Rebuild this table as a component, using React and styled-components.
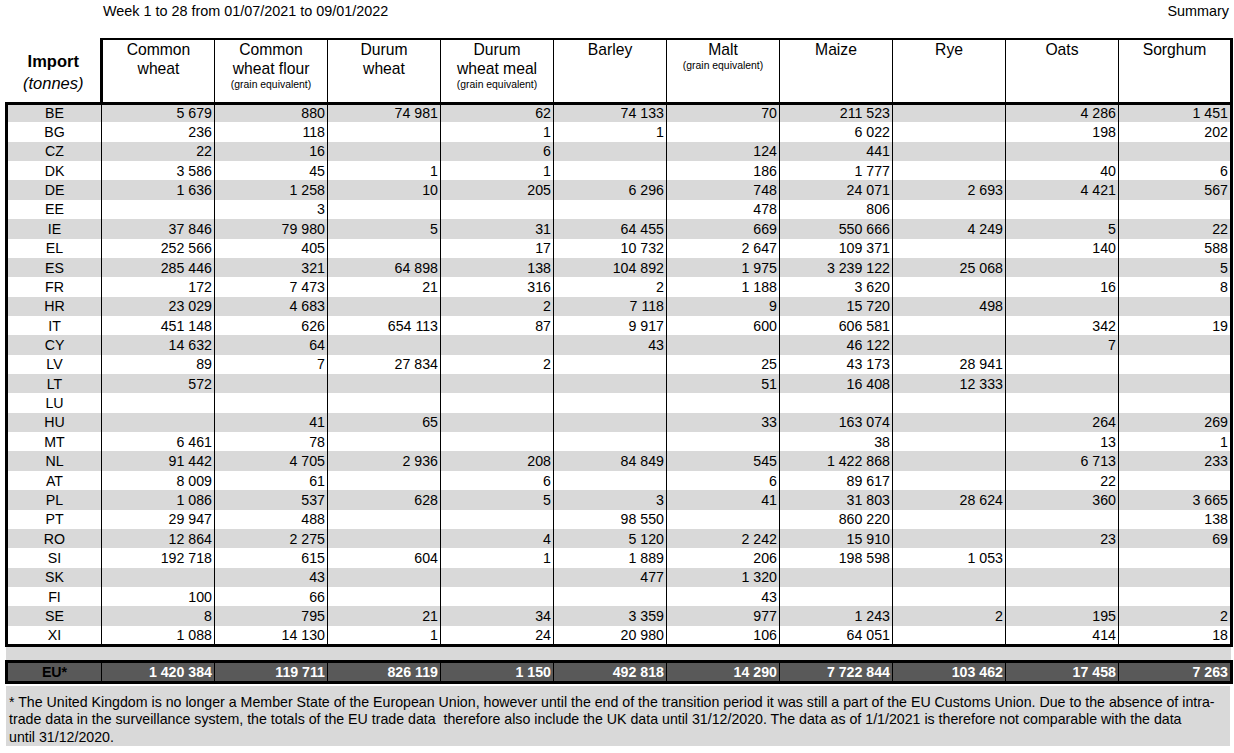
import React from 'react';
import styled, { createGlobalStyle } from 'styled-components';

const GlobalStyle = createGlobalStyle`
  body {
    margin: 0;
    background: #fff;
    color: #000;
    font-family: "Liberation Sans", Arial, sans-serif;
  }
`;

const Page = styled.div`
  width: 1234px;
  padding-left: 5px;
  box-sizing: border-box;
`;

const TopBar = styled.div`
  display: flex;
  justify-content: space-between;
  height: 19px;
  padding: 3px 5px 0 98px;
  font-size: 14.4px;
  line-height: 16px;
`;

const Sheet = styled.table`
  border-collapse: collapse;
  table-layout: fixed;
  width: 1226px;
  margin-top: ${props => props.$top || 0}px;
  font-size: 14.2px;
`;

const Col = styled.col`
  width: ${props => props.$w}px;
`;

const HeadRow = styled.tr`
  height: 64px;
`;

const ImportCell = styled.th`
  border-right: 3px solid #000;
  border-bottom: 3px solid #000;
  padding: 3px 0 0;
  text-align: center;
  vertical-align: middle;
  font-size: 16.5px;
  line-height: 22px;
  font-weight: normal;
`;

const ImportTitle = styled.div`
  font-weight: bold;
`;

const ImportUnit = styled.div`
  font-style: italic;
`;

const HeadCell = styled.th`
  border-top: 2px solid #000;
  border-left: 1px solid #000;
  border-right: ${props => (props.$last ? 3 : 1)}px solid #000;
  border-bottom: 3px solid #000;
  padding: 0;
  vertical-align: top;
  text-align: center;
  font-weight: normal;
  font-size: 15.7px;
  line-height: 19px;
`;

const Sub = styled.div`
  font-size: 10.4px;
  line-height: 14px;
`;

const Row = styled.tr`
  height: 19.36px;
  background: ${props => (props.$shade ? '#d9d9d9' : '#fff')};
`;

const Label = styled.td`
  border-left: 3px solid #000;
  border-right: 1px solid #000;
  border-bottom: ${props => (props.$end ? '3px solid #000' : 'none')};
  padding: 0;
  text-align: center;
  line-height: 16px;
`;

const Num = styled.td`
  border-right: ${props => (props.$last ? 3 : 1)}px solid #000;
  border-bottom: ${props => (props.$end ? '3px solid #000' : 'none')};
  padding: 0 2px 0 0;
  text-align: right;
  line-height: 16px;
  white-space: nowrap;
`;

const Band = styled.div`
  width: 1225px;
  height: 13px;
  margin-left: 1px;
  background: #d9d9d9;
`;

const TotalRow = styled.tr`
  height: 21px;
  background: #595959;
  font-weight: bold;
`;

const TotalLabel = styled.td`
  border: 3px solid #000;
  border-right: 1px solid #000;
  padding: 0;
  text-align: center;
  color: #000;
  line-height: 16px;
`;

const TotalNum = styled.td`
  border-top: 3px solid #000;
  border-bottom: 3px solid #000;
  border-right: ${props => (props.$last ? 3 : 1)}px solid #000;
  padding: 0 2px 0 0;
  text-align: right;
  color: #fff;
  line-height: 16px;
  white-space: nowrap;
`;

const Note = styled.div`
  width: 1221px;
  height: 52px;
  margin: 2px 0 0 1px;
  padding: 8px 0 0 3px;
  background: #d9d9d9;
  font-size: 14.2px;
  line-height: 17.6px;
`;

const NoteLine = styled.div`
  white-space: pre;
`;

const columns = [
  { title: 'Common', title2: 'wheat' },
  { title: 'Common', title2: 'wheat flour', sub: '(grain equivalent)' },
  { title: 'Durum', title2: 'wheat' },
  { title: 'Durum', title2: 'wheat meal', sub: '(grain equivalent)' },
  { title: 'Barley' },
  { title: 'Malt', sub: '(grain equivalent)' },
  { title: 'Maize' },
  { title: 'Rye' },
  { title: 'Oats' },
  { title: 'Sorghum' },
];

const rows = [
  ['BE', '5 679', '880', '74 981', '62', '74 133', '70', '211 523', '', '4 286', '1 451'],
  ['BG', '236', '118', '', '1', '1', '', '6 022', '', '198', '202'],
  ['CZ', '22', '16', '', '6', '', '124', '441', '', '', ''],
  ['DK', '3 586', '45', '1', '1', '', '186', '1 777', '', '40', '6'],
  ['DE', '1 636', '1 258', '10', '205', '6 296', '748', '24 071', '2 693', '4 421', '567'],
  ['EE', '', '3', '', '', '', '478', '806', '', '', ''],
  ['IE', '37 846', '79 980', '5', '31', '64 455', '669', '550 666', '4 249', '5', '22'],
  ['EL', '252 566', '405', '', '17', '10 732', '2 647', '109 371', '', '140', '588'],
  ['ES', '285 446', '321', '64 898', '138', '104 892', '1 975', '3 239 122', '25 068', '', '5'],
  ['FR', '172', '7 473', '21', '316', '2', '1 188', '3 620', '', '16', '8'],
  ['HR', '23 029', '4 683', '', '2', '7 118', '9', '15 720', '498', '', ''],
  ['IT', '451 148', '626', '654 113', '87', '9 917', '600', '606 581', '', '342', '19'],
  ['CY', '14 632', '64', '', '', '43', '', '46 122', '', '7', ''],
  ['LV', '89', '7', '27 834', '2', '', '25', '43 173', '28 941', '', ''],
  ['LT', '572', '', '', '', '', '51', '16 408', '12 333', '', ''],
  ['LU', '', '', '', '', '', '', '', '', '', ''],
  ['HU', '', '41', '65', '', '', '33', '163 074', '', '264', '269'],
  ['MT', '6 461', '78', '', '', '', '', '38', '', '13', '1'],
  ['NL', '91 442', '4 705', '2 936', '208', '84 849', '545', '1 422 868', '', '6 713', '233'],
  ['AT', '8 009', '61', '', '6', '', '6', '89 617', '', '22', ''],
  ['PL', '1 086', '537', '628', '5', '3', '41', '31 803', '28 624', '360', '3 665'],
  ['PT', '29 947', '488', '', '', '98 550', '', '860 220', '', '', '138'],
  ['RO', '12 864', '2 275', '', '4', '5 120', '2 242', '15 910', '', '23', '69'],
  ['SI', '192 718', '615', '604', '1', '1 889', '206', '198 598', '1 053', '', ''],
  ['SK', '', '43', '', '', '477', '1 320', '', '', '', ''],
  ['FI', '100', '66', '', '', '', '43', '', '', '', ''],
  ['SE', '8', '795', '21', '34', '3 359', '977', '1 243', '2', '195', '2'],
  ['XI', '1 088', '14 130', '1', '24', '20 980', '106', '64 051', '', '414', '18'],
];

const totals = ['EU*', '1 420 384', '119 711', '826 119', '1 150', '492 818', '14 290', '7 722 844', '103 462', '17 458', '7 263'];

const Columns = () => (
  <colgroup>
    <Col $w={95} />
    {columns.map((c, i) => (
      <Col key={i} $w={113} />
    ))}
  </colgroup>
);

const App = () => (
  <Page>
    <GlobalStyle />
    <TopBar>
      <span>Week 1 to 28 from 01/07/2021 to 09/01/2022</span>
      <span>Summary</span>
    </TopBar>

    <Sheet $top={16}>
      <Columns />
      <thead>
        <HeadRow>
          <ImportCell>
            <ImportTitle>Import</ImportTitle>
            <ImportUnit>(tonnes)</ImportUnit>
          </ImportCell>
          {columns.map((c, i) => (
            <HeadCell key={c.title + i} $last={i === columns.length - 1}>
              <div>{c.title}</div>
              {c.title2 && <div>{c.title2}</div>}
              {c.sub && <Sub>{c.sub}</Sub>}
            </HeadCell>
          ))}
        </HeadRow>
      </thead>
      <tbody>
        {rows.map((r, ri) => {
          const end = ri === rows.length - 1;
          return (
            <Row key={r[0]} $shade={ri % 2 === 0}>
              <Label $end={end}>{r[0]}</Label>
              {r.slice(1).map((v, ci) => (
                <Num key={ci} $last={ci === 9} $end={end}>
                  {v}
                </Num>
              ))}
            </Row>
          );
        })}
      </tbody>
    </Sheet>

    <Band />

    <Sheet>
      <Columns />
      <tbody>
        <TotalRow>
          <TotalLabel>{totals[0]}</TotalLabel>
          {totals.slice(1).map((v, i) => (
            <TotalNum key={i} $last={i === 9}>
              {v}
            </TotalNum>
          ))}
        </TotalRow>
      </tbody>
    </Sheet>

    <Note>
      <NoteLine>
        * The United Kingdom is no longer a Member State of the European Union, however until the end of the transition period it was still a part of the EU Customs Union. Due to the absence of intra-
      </NoteLine>
      <NoteLine>
        trade data in the surveillance system, the totals of the EU trade data  therefore also include the UK data until 31/12/2020. The data as of 1/1/2021 is therefore not comparable with the data
      </NoteLine>
      <NoteLine>until 31/12/2020.</NoteLine>
    </Note>
  </Page>
);

export default App;
